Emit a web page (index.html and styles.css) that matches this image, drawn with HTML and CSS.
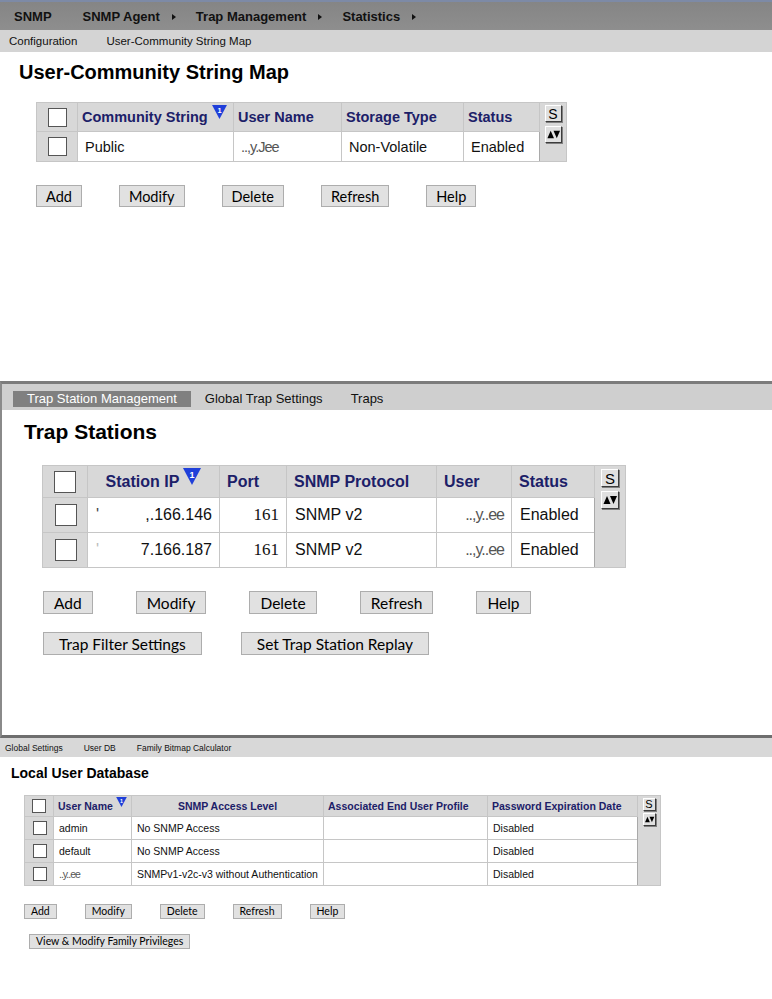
FILE: index.html
```html
<!DOCTYPE html>
<html>

<head>
    <title>SNMP - Community, Trap Stations, User DB</title>

    <link rel="stylesheet" href="styles.css">
</head>

<body>

    <!-- first capture: user-community string map -->
    <section class="shot shot-map">

        <nav class="menu">
            <span class="menu-item menu-first">SNMP</span>
            <span class="menu-item has-sub">SNMP Agent</span>
            <span class="menu-item has-sub">Trap Management</span>
            <span class="menu-item has-sub">Statistics</span>
        </nav>

        <nav class="tabs">
            <span class="tab">Configuration</span>
            <span class="tab">User-Community String Map</span>
        </nav>

        <h1 class="page-title">User-Community String Map</h1>

        <table class="grid">
            <colgroup>
                <col class="c-check">
                <col class="c-community">
                <col class="c-user">
                <col class="c-storage">
                <col class="c-status">
                <col class="c-side">
            </colgroup>
            <tr class="grid-head">
                <th class="cell-check"><input type="checkbox" class="check"></th>
                <th>Community String <svg class="sort-icon" viewBox="0 0 16 15"><polygon points="0,0 16,0 8,15" fill="#1f3fd9"/><text x="8" y="8.5" text-anchor="middle" font-size="8" font-weight="bold" fill="#fff" font-family="Liberation Sans">1</text></svg></th>
                <th>User Name</th>
                <th>Storage Type</th>
                <th>Status</th>
                <td class="grid-side" rowspan="2">
                    <div class="side-tools">
                        <span class="mini-btn">S</span>
                        <span class="mini-btn"><svg viewBox="0 0 16 16"><polygon points="1.5,12 5,4 8.5,12" fill="#000"/><polygon points="8,4 15,4 11.5,12" fill="#000"/></svg></span>
                    </div>
                </td>
            </tr>
            <tr>
                <td class="cell-check"><input type="checkbox" class="check"></td>
                <td>Public</td>
                <td class="smudged">..,y.Jee</td>
                <td>Non-Volatile</td>
                <td>Enabled</td>
            </tr>
        </table>

        <div class="actions">
            <button class="btn">Add</button>
            <button class="btn">Modify</button>
            <button class="btn">Delete</button>
            <button class="btn">Refresh</button>
            <button class="btn">Help</button>
        </div>

    </section>

    <!-- second capture: trap stations -->
    <section class="shot shot-trap">

        <nav class="tabs">
            <span class="tab tab-active">Trap Station Management</span>
            <span class="tab">Global Trap Settings</span>
            <span class="tab">Traps</span>
        </nav>

        <h1 class="page-title">Trap Stations</h1>

        <table class="grid">
            <colgroup>
                <col class="c-check">
                <col class="c-ip">
                <col class="c-port">
                <col class="c-proto">
                <col class="c-user">
                <col class="c-status">
                <col class="c-side">
            </colgroup>
            <tr class="grid-head">
                <th class="cell-check"><input type="checkbox" class="check"></th>
                <th class="align-center">Station IP <svg class="sort-icon" viewBox="0 0 16 15"><polygon points="0,0 16,0 8,15" fill="#1f3fd9"/><text x="8" y="8.5" text-anchor="middle" font-size="8" font-weight="bold" fill="#fff" font-family="Liberation Sans">1</text></svg></th>
                <th>Port</th>
                <th>SNMP Protocol</th>
                <th>User</th>
                <th>Status</th>
                <td class="grid-side" rowspan="3">
                    <div class="side-tools">
                        <span class="mini-btn">S</span>
                        <span class="mini-btn"><svg viewBox="0 0 16 16"><polygon points="1.5,12 5,4 8.5,12" fill="#000"/><polygon points="8,4 15,4 11.5,12" fill="#000"/></svg></span>
                    </div>
                </td>
            </tr>
            <tr>
                <td class="cell-check"><input type="checkbox" class="check"></td>
                <td class="align-right"><span class="stray">'</span>,.166.146</td>
                <td class="align-right port">161</td>
                <td>SNMP v2</td>
                <td class="smudged align-right">..,y..ee</td>
                <td>Enabled</td>
            </tr>
            <tr>
                <td class="cell-check"><input type="checkbox" class="check"></td>
                <td class="align-right"><span class="stray faint">'</span>7.166.187</td>
                <td class="align-right port">161</td>
                <td>SNMP v2</td>
                <td class="smudged align-right">..,y..ee</td>
                <td>Enabled</td>
            </tr>
        </table>

        <div class="actions">
            <button class="btn">Add</button>
            <button class="btn">Modify</button>
            <button class="btn">Delete</button>
            <button class="btn">Refresh</button>
            <button class="btn">Help</button>
        </div>
        <div class="actions actions-second">
            <button class="btn">Trap Filter Settings</button>
            <button class="btn">Set Trap Station Replay</button>
        </div>

    </section>

    <!-- third capture: local user database -->
    <section class="shot shot-users">

        <nav class="tabs">
            <span class="tab">Global Settings</span>
            <span class="tab">User DB</span>
            <span class="tab">Family Bitmap Calculator</span>
        </nav>

        <h1 class="page-title">Local User Database</h1>

        <table class="grid">
            <colgroup>
                <col class="c-check">
                <col class="c-name">
                <col class="c-access">
                <col class="c-profile">
                <col class="c-expire">
                <col class="c-side">
            </colgroup>
            <tr class="grid-head">
                <th class="cell-check"><input type="checkbox" class="check"></th>
                <th>User Name <svg class="sort-icon" viewBox="0 0 16 15"><polygon points="0,0 16,0 8,15" fill="#1f3fd9"/><text x="8" y="8.5" text-anchor="middle" font-size="8" font-weight="bold" fill="#fff" font-family="Liberation Sans">1</text></svg></th>
                <th class="align-center">SNMP Access Level</th>
                <th>Associated End User Profile</th>
                <th>Password Expiration Date</th>
                <td class="grid-side" rowspan="4">
                    <div class="side-tools">
                        <span class="mini-btn">S</span>
                        <span class="mini-btn"><svg viewBox="0 0 16 16"><polygon points="1.5,12 5,4 8.5,12" fill="#000"/><polygon points="8,4 15,4 11.5,12" fill="#000"/></svg></span>
                    </div>
                </td>
            </tr>
            <tr>
                <td class="cell-check"><input type="checkbox" class="check"></td>
                <td>admin</td>
                <td>No SNMP Access</td>
                <td></td>
                <td>Disabled</td>
            </tr>
            <tr>
                <td class="cell-check"><input type="checkbox" class="check"></td>
                <td>default</td>
                <td>No SNMP Access</td>
                <td></td>
                <td>Disabled</td>
            </tr>
            <tr>
                <td class="cell-check"><input type="checkbox" class="check"></td>
                <td class="smudged">..y..ee</td>
                <td>SNMPv1-v2c-v3 without Authentication</td>
                <td></td>
                <td>Disabled</td>
            </tr>
        </table>

        <div class="actions">
            <button class="btn">Add</button>
            <button class="btn">Modify</button>
            <button class="btn">Delete</button>
            <button class="btn">Refresh</button>
            <button class="btn">Help</button>
        </div>
        <div class="actions actions-second">
            <button class="btn">View &amp; Modify Family Privileges</button>
        </div>

    </section>

</body>

</html>
```

FILE: styles.css
```css
* {
    margin: 0;
    padding: 0;
    box-sizing: border-box;
}

html,
body {
    width: 100%;
    height: 100%;
}

body {
    font-family: "Liberation Sans", Arial, sans-serif;
    color: #111;
    background: #fff;
    overflow: hidden;
}

.shot {
    width: 772px;
    overflow: hidden;
}

/* ---- top menu bar ---- */

.menu {
    display: flex;
    align-items: center;
    gap: 20px;
    height: 30px;
    padding-left: 14px;
    border-top: 2px solid #7d8aa6;
    background: linear-gradient(#858585, #8e8e8e);
    font-size: 13px;
    font-weight: bold;
    color: #111;
}

.menu-first {
    margin-right: 11px;
}

.has-sub::after {
    content: "";
    display: inline-block;
    margin-left: 12px;
    border-left: 4px solid #111;
    border-top: 3px solid transparent;
    border-bottom: 3px solid transparent;
    vertical-align: 1px;
}

/* ---- second level tabs ---- */

.tabs {
    display: flex;
    align-items: center;
    background-color: #d4d4d4;
}

.tab-active {
    background-color: #808080;
    color: #fff;
}

.page-title {
    font-weight: bold;
    color: #000;
}

/* ---- grid ---- */

.grid {
    border-collapse: collapse;
    table-layout: fixed;
    border: 1px solid #a9a9a9;
}

.grid th,
.grid td {
    border: 1px solid #c6c6c6;
    text-align: left;
    white-space: nowrap;
    overflow: hidden;
}

.grid th {
    background-color: #d8d8d8;
    color: #1c2068;
    font-weight: bold;
}

.grid td {
    background-color: #fff;
    font-weight: normal;
}

.grid .cell-check {
    background-color: #d8d8d8;
    text-align: center;
    padding: 0;
}

.grid .grid-side {
    background-color: #d8d8d8;
    vertical-align: top;
    border-left: 1px solid #a9a9a9;
}

.align-center {
    text-align: center !important;
}

.align-right {
    text-align: right !important;
}

.check {
    appearance: none;
    -webkit-appearance: none;
    display: block;
    margin: 0 auto;
    background: #fff;
    border: 1px solid #555;
}

.sort-icon {
    vertical-align: top;
}

.smudged {
    color: #555;
    letter-spacing: -1px;
}

.stray {
    float: left;
    color: #444;
}

.faint {
    color: #bbb;
}

.port {
    font-family: "Liberation Serif", "Times New Roman", serif;
}

.side-tools {
    display: flex;
    flex-direction: column;
    align-items: center;
}

.mini-btn {
    display: flex;
    align-items: center;
    justify-content: center;
    background-color: #e0e0e0;
    border: 1px solid;
    border-color: #fff #3c3c3c #3c3c3c #fff;
    box-shadow: 1px 1px 0 #808080;
    font-family: "Liberation Sans", Arial, sans-serif;
    color: #000;
    line-height: 1;
}

.mini-btn svg {
    width: 100%;
    height: 100%;
}

/* ---- buttons ---- */

.actions {
    display: flex;
}

.btn {
    font-family: Lato, "Open Sans", sans-serif;
    color: #000;
    background-color: #e1e1e1;
    border: 1px solid #adadad;
    border-radius: 0;
    text-align: center;
}

/* ==== capture 1: medium scale ==== */

.shot-map {
    height: 381px;
}

.shot-map .tabs {
    height: 22px;
    gap: 29px;
    padding-left: 9px;
    font-size: 11.5px;
}

.shot-map .page-title {
    font-size: 20px;
    line-height: 24px;
    margin: 8px 0 18px 19px;
}

.shot-map .grid {
    width: 530px;
    margin-left: 36px;
    font-size: 14.5px;
}

.shot-map .c-check { width: 41px; }
.shot-map .c-community { width: 156px; }
.shot-map .c-user { width: 108px; }
.shot-map .c-storage { width: 122px; }
.shot-map .c-status { width: 76px; }
.shot-map .c-side { width: 27px; }

.shot-map .grid tr { height: 30px; }
.shot-map .grid .grid-head { height: 29px; }

.shot-map .grid th { padding: 0 4px; }
.shot-map .grid td { padding: 0 7px; }

.shot-map .check {
    width: 19px;
    height: 19px;
}

.shot-map .sort-icon {
    width: 15px;
    height: 14px;
    margin-top: -4px;
}

.shot-map .grid .grid-side { padding: 2px 0 0; }

.shot-map .side-tools { gap: 4px; }

.shot-map .mini-btn {
    width: 17px;
    height: 17px;
    font-size: 14px;
}

.shot-map .actions {
    margin: 23px 0 0 36px;
    gap: 37px;
}

.shot-map .btn {
    height: 22px;
    padding: 0 9px;
    font-size: 14.5px;
}

/* ==== capture 2: large scale ==== */

.shot-trap {
    height: 357px;
    border-top: 3px solid #7c7c7c;
    border-left: 2px solid #8a8a8a;
    border-bottom: 3px solid #6e6e6e;
}

.shot-trap .tabs {
    height: 26px;
    align-items: flex-start;
    padding: 7px 0 0 11px;
    background-color: #cfcfcf;
    font-size: 13px;
}

.shot-trap .tab {
    padding: 0 14px;
    line-height: 16px;
}

.shot-trap .page-title {
    font-size: 21px;
    line-height: 26px;
    margin: 9px 0 20px 22px;
}

.shot-trap .grid {
    width: 583px;
    margin-left: 40px;
    font-size: 16px;
}

.shot-trap .c-check { width: 45px; }
.shot-trap .c-ip { width: 132px; }
.shot-trap .c-port { width: 67px; }
.shot-trap .c-proto { width: 150px; }
.shot-trap .c-user { width: 75px; }
.shot-trap .c-status { width: 83px; }
.shot-trap .c-side { width: 31px; }

.shot-trap .grid tr { height: 35px; }
.shot-trap .grid .grid-head { height: 32px; }

.shot-trap .grid th { padding: 0 7px; }
.shot-trap .grid td { padding: 0 7px 0 8px; }

.shot-trap .port { font-size: 17px; }

.shot-trap .check {
    width: 22px;
    height: 22px;
}

.shot-trap .sort-icon {
    width: 18px;
    height: 17px;
    margin-top: -5px;
}

.shot-trap .grid .grid-side { padding: 3px 0 0; }

.shot-trap .side-tools { gap: 4px; }

.shot-trap .mini-btn {
    width: 18px;
    height: 18px;
    font-size: 15px;
}

.shot-trap .actions {
    margin: 23px 0 0 41px;
    gap: 43px;
}

.shot-trap .actions-second {
    margin-top: 18px;
    gap: 39px;
}

.shot-trap .btn {
    height: 23px;
    padding: 0 10px;
    font-size: 15.5px;
}

.shot-trap .actions-second .btn {
    padding: 0 15px;
}

/* ==== capture 3: small scale ==== */

.shot-users {
    height: 261px;
}

.shot-users .tabs {
    height: 19px;
    gap: 21px;
    padding-left: 5px;
    background-color: #d8d8d8;
    font-size: 8.5px;
}

.shot-users .page-title {
    font-size: 14px;
    line-height: 17px;
    margin: 8px 0 13px 11px;
}

.shot-users .grid {
    width: 636px;
    margin-left: 24px;
    font-size: 10.5px;
}

.shot-users .c-check { width: 29px; }
.shot-users .c-name { width: 78px; }
.shot-users .c-access { width: 192px; }
.shot-users .c-profile { width: 164px; }
.shot-users .c-expire { width: 150px; }
.shot-users .c-side { width: 23px; }

.shot-users .grid tr { height: 23px; }
.shot-users .grid .grid-head { height: 21px; }

.shot-users .grid th { padding: 0 4px; }
.shot-users .grid td { padding: 0 4px 0 5px; }

.shot-users .check {
    width: 14px;
    height: 14px;
}

.shot-users .sort-icon {
    width: 11px;
    height: 10px;
    margin-top: -3px;
}

.shot-users .grid .grid-side { padding: 2px 0 0; }

.shot-users .side-tools { gap: 2px; }

.shot-users .mini-btn {
    width: 13px;
    height: 13px;
    font-size: 11px;
}

.shot-users .actions {
    margin: 18px 0 0 24px;
    gap: 28px;
}

.shot-users .actions-second {
    margin: 15px 0 0 29px;
}

.shot-users .btn {
    height: 15px;
    padding: 0 6px;
    font-size: 10.5px;
    line-height: 13px;
}
```
